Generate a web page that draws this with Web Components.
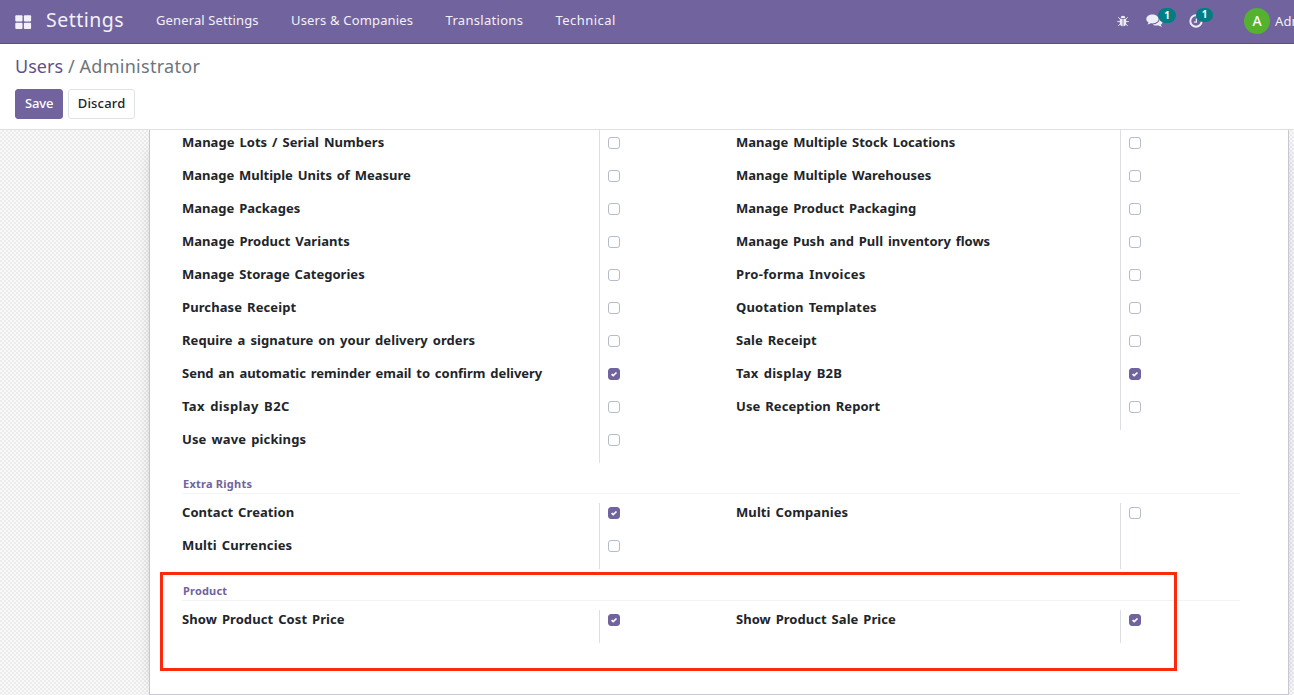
<!DOCTYPE html>
<html lang="en">
<head>
<meta charset="utf-8">
<title>Users - Administrator</title>
<style>
html,body{margin:0;height:100%;overflow:hidden}
body{font-family:"Noto Sans","Open Sans",sans-serif;font-size:13px;color:#212529;background:#fff}
</style>
</head>
<body>
<settings-page></settings-page>
<script>
function define(name, html, init) {
  const t = document.createElement('template');
  t.innerHTML = html;
  customElements.define(name, class extends HTMLElement {
    connectedCallback() {
      if (this.shadowRoot) return;
      this.attachShadow({mode: 'open'}).append(t.content.cloneNode(true));
      if (init) init.call(this, this.shadowRoot);
    }
  });
}

/* Text tracked out to a given line width */
define('fit-text', `<style>:host{display:inline-block;white-space:nowrap}span{display:inline-block}</style><span><slot></slot></span>`, function (r) {
  const s = r.querySelector('span'), w = +this.getAttribute('w');
  const n = this.textContent.length;
  this.style.width = w + 'px';
  s.style.letterSpacing = ((w + .2 - s.getBoundingClientRect().width) / n) + 'px';
});

define('check-box', `<style>
:host{display:block;box-sizing:border-box;width:12px;height:12px;border:1px solid #b4bcc8;border-radius:3px;background:#fff}
svg{display:none}
:host([checked]){background:#71639e;border-color:#71639e}
:host([checked]) svg{display:block;width:10px;height:10px}
</style><svg viewBox="0 0 10 10"><path d="M2.6 5.2 4.2 6.7 7.5 3.5" fill="none" stroke="#fff" stroke-width="1.7"/></svg>`);

define('field-row', `<style>
:host{display:flex;height:33px}
.l{flex:1;font-weight:700;font-size:13px;line-height:18px;word-spacing:1.5px}
.c{box-sizing:border-box;width:var(--cell,104px);border-left:1px solid #dcdee3;padding:4px 0 0 8px}
</style><div class="l"></div><div class="c"><check-box></check-box></div>`, function (r) {
  const label = this.getAttribute('label');
  if (label) {
    const f = document.createElement('fit-text');
    f.setAttribute('w', this.getAttribute('w'));
    f.textContent = label;
    r.querySelector('.l').append(f);
    if (this.hasAttribute('checked')) r.querySelector('check-box').setAttribute('checked', '');
  } else r.querySelector('check-box').remove();
});

define('field-group', `<style>
:host{display:grid;grid-template-columns:521px 504px;column-gap:33px;align-items:start}
.b{--cell:120px}
</style><div class="a"><slot name="left"></slot></div><div class="b"><slot name="right"></slot></div>`);

define('section-title', `<style>
:host{display:block;box-sizing:border-box;width:1058px;height:20px;border-bottom:1px solid #f3f3f5;color:#71639e;font-weight:700;font-size:11px;line-height:20px;padding-left:1px;margin-bottom:9px}
</style><slot></slot>`);

define('bug-icon', `<style>:host,svg{display:block}</style><svg width="12" height="12" viewBox="0 0 12 12" fill="#eeecf4" stroke="#eeecf4"><path stroke="none" d="M3.7 3.1a2.3 2.3 0 0 1 4.6 0zM2.8 3.8h2.8v7.4C3.7 11 2.8 9.7 2.8 7.7zM6.4 3.8h2.8v3.9c0 2-.9 3.3-2.8 3.5z"/><path fill="none" stroke-width=".9" d="M.2 6.6h3M8.8 6.6h3M1.2 2.2l2 2M10.8 2.2l-2 2M1.3 11l2-2.3M10.7 11l-2-2.3"/></svg>`);
define('chat-icon', `<style>:host,svg{display:block}</style><svg width="17" height="14" viewBox="0 0 17 14" fill="#eeecf4"><path d="M6.4.5C3 .5.3 2.5.3 5c0 1.4.9 2.7 2.3 3.5-.2.8-.7 1.4-1.2 2 1.4-.1 2.6-.6 3.5-1.2.5.1 1 .1 1.5.1 3.4 0 6.2-2 6.2-4.4S9.800.5 6.400.5z"/><path d="M13.600 4.200c.4 3.500-2.700 6.100-6.900 6.200 1.100.8 2.600 1.200 4.200 1.200.6 0 1.100 0 1.600-.2 1 .700 2.200 1.200 3.500 1.300-.5-.6-1-1.200-1.200-2 1.200-.7 2-1.800 2-3.100 0-1.400-1.200-2.700-3.200-3.400z"/></svg>`);
define('clock-icon', `<style>:host,svg{display:block}</style><svg width="14" height="14" viewBox="0 0 14 14" fill="none" stroke="#eeecf4"><path stroke-width="1.9" d="M7 1.300A5.700 5.700 0 1 0 12.700 7"/><path stroke-width="1.200" d="M7.400 4.500v3.600H4.900"/></svg>`);

define('count-badge', `<style>:host{position:absolute;box-sizing:border-box;height:15px;border-radius:8px;background:#017e84;color:#fff;font-weight:700;font-size:10px;line-height:14px;text-align:center}</style><slot></slot>`);

define('nav-bar', `<style>
:host{display:flex;box-sizing:border-box;height:44px;background:#71639e;border-bottom:1px solid #5a4f7f;color:#f3f1f7;align-items:center;overflow:hidden}
.apps{display:block;margin-left:15px}
.brand{font-size:19.500px;line-height:40px;height:43px;margin-left:14px;width:110px}
nav{display:flex;gap:32.5px;line-height:41px;height:43px;font-size:13px;flex:1}
.i{position:relative;flex:none;top:-.5px}
.u{display:flex;align-items:center;gap:5px;flex:none;width:50px;margin-left:41px;font-size:13px;height:43px;margin-top:-1px}
.av{width:26px;height:26px;line-height:26px;border-radius:50%;background:#55b231;color:#fff;text-align:center;font-size:14px;font-weight:500;flex:none}
</style>
<svg class="apps" width="17" height="14" viewBox="0 0 17 14" fill="#f3f1f7"><rect x=".3" y=".2" width="7.200" height="6.200" rx="1"/><rect x="8.900" y=".2" width="7.200" height="6.200" rx="1"/><rect x=".3" y="7.700" width="7.200" height="6.200" rx="1"/><rect x="8.900" y="7.700" width="7.200" height="6.200" rx="1"/></svg>
<div class="brand"><fit-text w="78">Settings</fit-text></div>
<nav><fit-text w="102.500">General Settings</fit-text><fit-text w="122">Users &amp; Companies</fit-text><fit-text w="77.5">Translations</fit-text><fit-text w="60">Technical</fit-text></nav>
<div class="i"><bug-icon></bug-icon></div>
<div class="i" style="margin-left:17px"><chat-icon></chat-icon><count-badge style="left:12px;top:-6px;width:18px">1</count-badge></div>
<div class="i" style="margin-left:26px"><clock-icon></clock-icon><count-badge style="left:7px;top:-6px;width:17px;height:14px;line-height:13px">1</count-badge></div>
<div class="u"><div class="av">A</div><fit-text w="86">Administrator</fit-text></div>`);

define('control-panel', `<style>
:host{display:block;box-sizing:border-box;height:86px;border-bottom:1px solid #dee0e5;background:#fff;padding:9px 15px 0}
.bc{font-size:18px;line-height:27px;height:36px;color:#6c757d;display:flex}
.bc .a{color:#5f5289}
.bs{display:flex;gap:5px}
button{font:500 13px/20px "Noto Sans","Open Sans",sans-serif;box-sizing:border-box;height:30px;border:1px solid #71639e;border-radius:3px;background:#71639e;color:#fff;padding:0 0 2px;width:48px}
button.s{background:#fff;border-color:#dee2e6;color:#212529;width:67px}
</style>
<div class="bc"><fit-text class="a" w="48">Users</fit-text><span style="width:16.500px;text-align:center">/</span><fit-text w="120.500">Administrator</fit-text></div>
<div class="bs"><button><fit-text w="28">Save</fit-text></button><button class="s"><fit-text w="47.500">Discard</fit-text></button></div>`);

define('form-sheet', `<style>
:host{display:block;position:relative;box-sizing:border-box;width:1140px;height:565px;margin-left:149px;padding:0 0 0 32px;background:#fff;border:1px solid #c8c8d3;border-top:0;box-shadow:0 5px 20px -15px #000}
#g{margin-top:-30px;padding-top:0}
section-title{margin-top:11px}
section-title:last-of-type{margin-top:12px}
.mark{position:absolute;box-sizing:border-box;left:10px;top:442px;width:1017px;height:99px;border:3px solid #fb2a0c}
</style>
<div id="g"></div><div class="mark"></div>`, function (r) {
  const data = [
    [null,
      [['',0],['Manage Lots / Serial Numbers',202],['Manage Multiple Units of Measure',228.5],['Manage Packages',118],['Manage Product Variants',167.5],['Manage Storage Categories',182.5],['Purchase Receipt',114],['Require a signature on your delivery orders',293],['Send an automatic reminder email to confirm delivery',360,1],['Tax display B2C',107.5],['Use wave pickings',124]],
      [['',0],['Manage Multiple Stock Locations',219],['Manage Multiple Warehouses',195],['Manage Product Packaging',180],['Manage Push and Pull inventory flows',254],['Pro-forma Invoices',129.5],['Quotation Templates',140.5],['Sale Receipt',80.5],['Tax display B2B',106,1],['Use Reception Report',144]]],
    ['Extra Rights', [['Contact Creation',112,1],['Multi Currencies',110]], [['Multi Companies',112],['',0]]],
    ['Product', [['Show Product Cost Price',162.5,1]], [['Show Product Sale Price',159.5,1]]]
  ];
  const widths = {'Extra Rights': 69, 'Product': 44};
  const rows = (list, slot) => `<div slot="${slot}">` + list.map(([l, w, c]) => `<field-row label="${l}" w="${w}"${c ? ' checked' : ''}></field-row>`).join('') + '</div>';
  r.querySelector('#g').innerHTML = data.map(([t, a, b]) =>
    (t ? `<section-title><fit-text w="${widths[t]}">${t}</fit-text></section-title>` : '') +
    `<field-group>${rows(a, 'left')}${rows(b, 'right')}</field-group>`).join('');
});

define('settings-page', `<style>
:host{display:block;height:695px;overflow:hidden}
main{display:flow-root;height:565px;overflow:hidden;background:#f7f7f7 conic-gradient(#ececec 25%,#f9f9f9 0 50%,#ececec 0 75%,#f9f9f9 0) 0 0/4px 4px}
form-sheet{display:flow-root}
</style><nav-bar></nav-bar><control-panel></control-panel><main><form-sheet></form-sheet></main>`);
</script>
</body>
</html>
